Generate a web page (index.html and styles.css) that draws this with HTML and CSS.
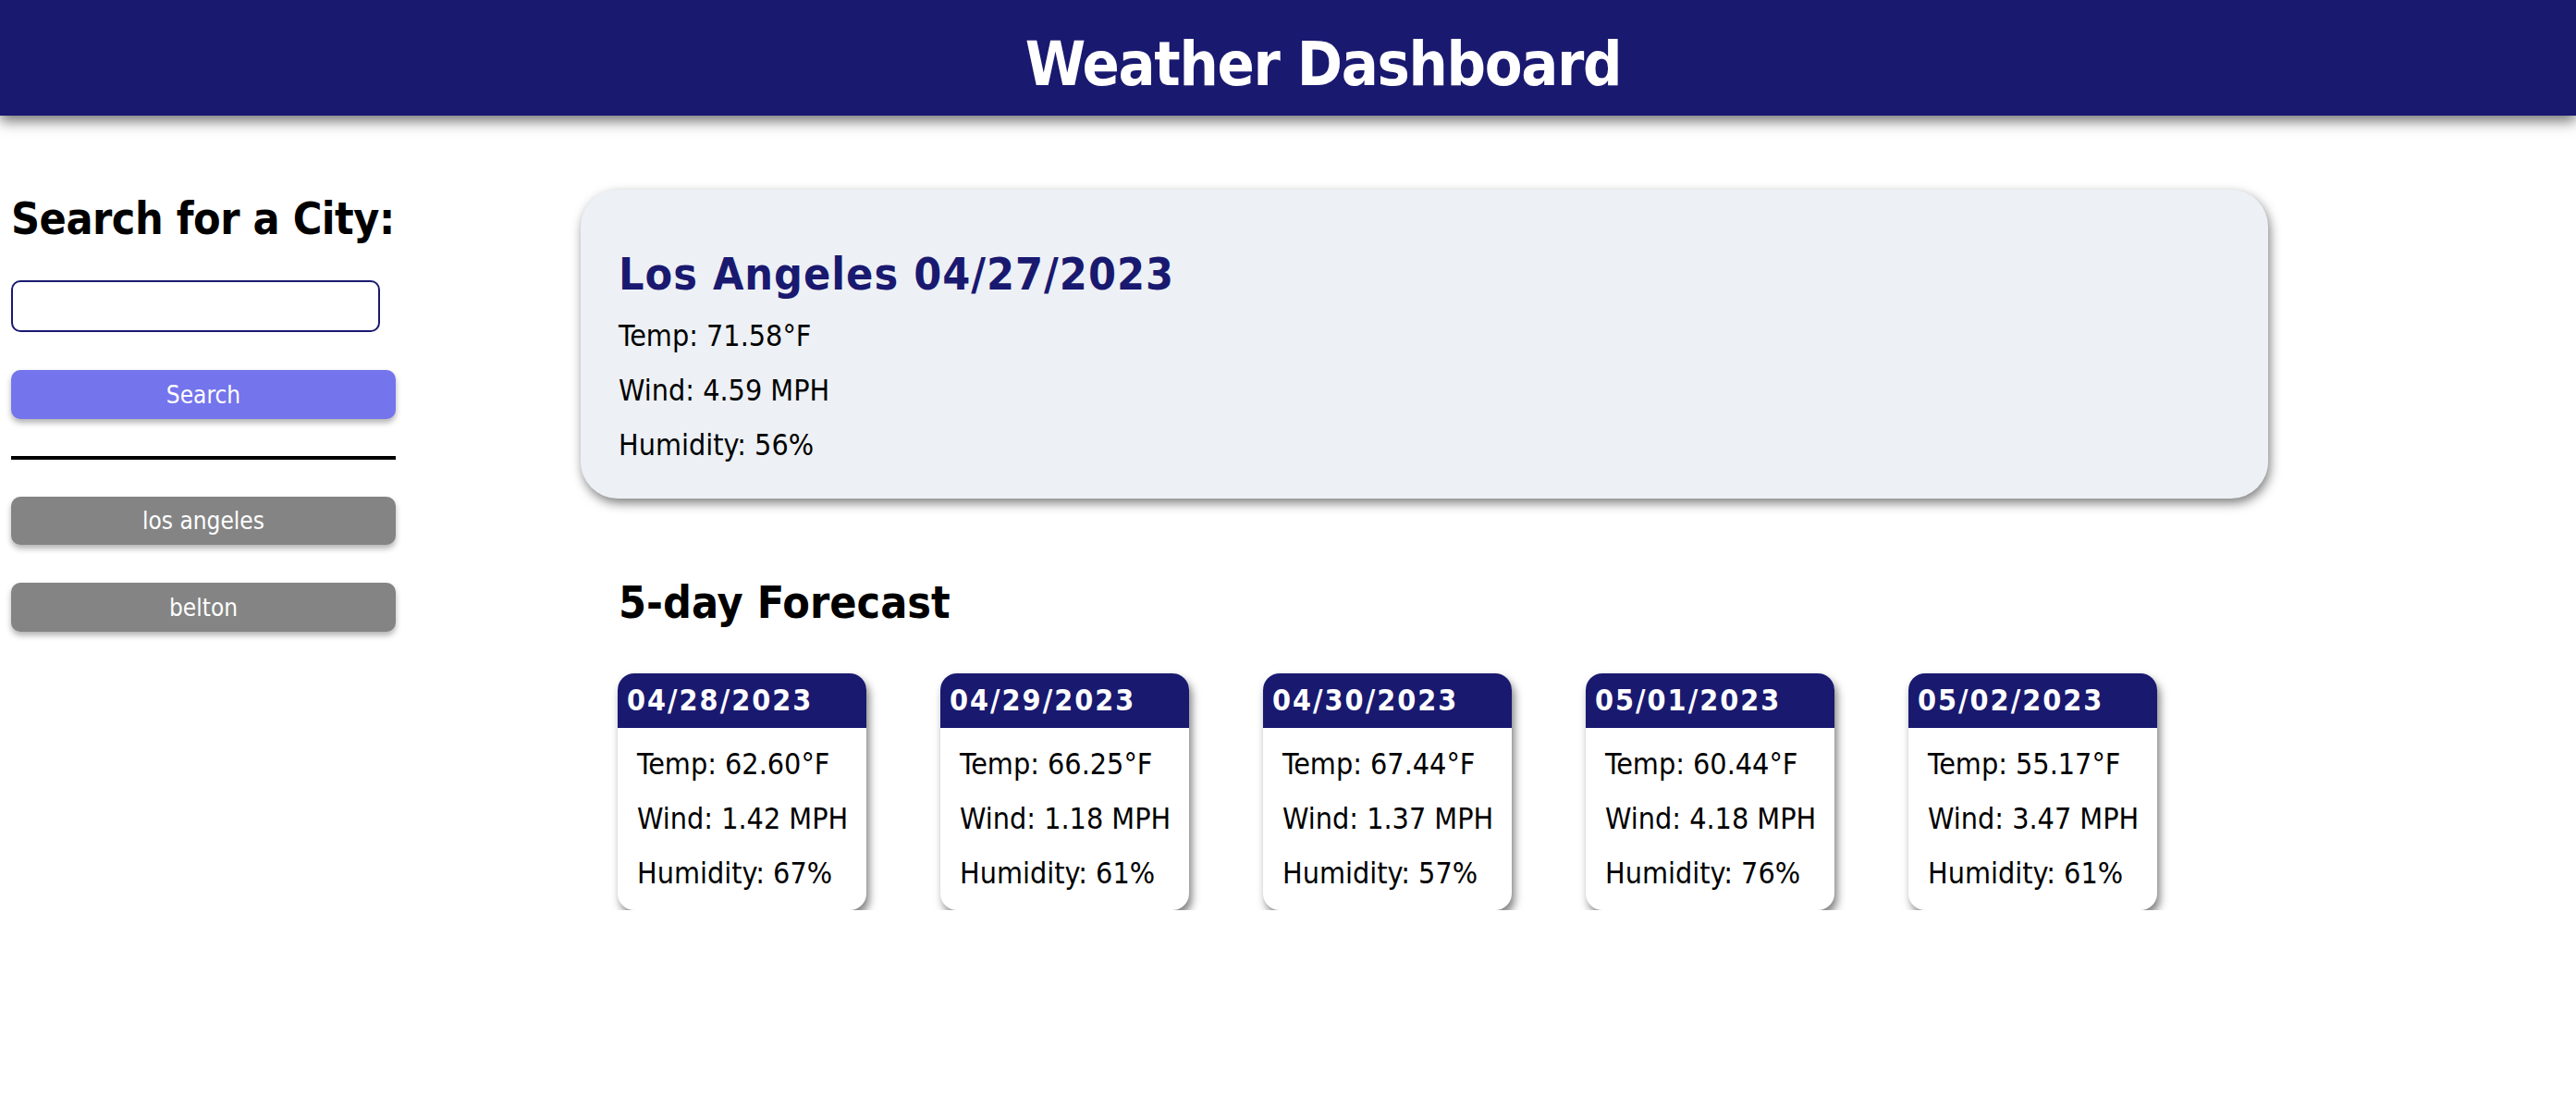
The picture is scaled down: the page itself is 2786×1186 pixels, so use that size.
FILE: index.html
```html
<!DOCTYPE html>
<html lang="en">
<head>
<meta charset="utf-8">
<title>Weather Dashboard</title>
<link rel="stylesheet" href="styles.css">
</head>
<body>
<header class="topbar">
  <h1 class="topbar-title">Weather Dashboard</h1>
</header>
<div class="layout">
  <aside class="sidebar">
    <h2 class="sidebar-title">Search for a City:</h2>
    <input class="city-input" type="text">
    <button class="btn btn-search">Search</button>
    <hr class="divider">
    <button class="btn btn-history btn-first">los angeles</button>
    <button class="btn btn-history">belton</button>
  </aside>
  <main class="main">
    <section class="current">
      <h2 class="current-title">Los Angeles 04/27/2023</h2>
      <p class="line">Temp: 71.58°F</p>
      <p class="line">Wind: 4.59 MPH</p>
      <p class="line">Humidity: 56%</p>
    </section>
    <h2 class="forecast-title">5-day Forecast</h2>
    <div class="forecast-row">
      <div class="day">
        <h4 class="day-date">04/28/2023</h4>
        <div class="day-body">
          <p class="line">Temp: 62.60°F</p>
          <p class="line">Wind: 1.42 MPH</p>
          <p class="line">Humidity: 67%</p>
        </div>
      </div>
      <div class="day">
        <h4 class="day-date">04/29/2023</h4>
        <div class="day-body">
          <p class="line">Temp: 66.25°F</p>
          <p class="line">Wind: 1.18 MPH</p>
          <p class="line">Humidity: 61%</p>
        </div>
      </div>
      <div class="day">
        <h4 class="day-date">04/30/2023</h4>
        <div class="day-body">
          <p class="line">Temp: 67.44°F</p>
          <p class="line">Wind: 1.37 MPH</p>
          <p class="line">Humidity: 57%</p>
        </div>
      </div>
      <div class="day">
        <h4 class="day-date">05/01/2023</h4>
        <div class="day-body">
          <p class="line">Temp: 60.44°F</p>
          <p class="line">Wind: 4.18 MPH</p>
          <p class="line">Humidity: 76%</p>
        </div>
      </div>
      <div class="day">
        <h4 class="day-date">05/02/2023</h4>
        <div class="day-body">
          <p class="line">Temp: 55.17°F</p>
          <p class="line">Wind: 3.47 MPH</p>
          <p class="line">Humidity: 61%</p>
        </div>
      </div>
    </div>
  </main>
</div>
</body>
</html>
```
FILE: styles.css
```css
* { box-sizing: border-box; }

html, body {
  margin: 0;
  padding: 0;
  background: #ffffff;
}

body {
  font-family: "DejaVu Sans Condensed", "DejaVu Sans", sans-serif;
  font-stretch: condensed;
  color: #000000;
}

.topbar {
  height: 125px;
  background: #191970;
  box-shadow: 0 6px 14px rgba(0, 0, 0, 0.55);
  padding-top: 15px;
  padding-left: 76px;
  position: relative;
  z-index: 1;
}

.topbar-title {
  margin: 0;
  text-align: center;
  color: #ffffff;
  font-size: 66px;
  font-weight: bold;
  line-height: 110px;
  letter-spacing: -1.3px;
}

.layout {
  display: flex;
  padding-top: 80px;
}

.sidebar {
  width: 428px;
  padding-left: 12px;
  display: flex;
  flex-direction: column;
  flex-shrink: 0;
}

.sidebar-title {
  margin: 3px 0 0 0;
  font-size: 48px;
  line-height: 56px;
  font-weight: bold;
  letter-spacing: -0.5px;
  white-space: nowrap;
}

.city-input {
  margin-top: 39px;
  width: 399px;
  height: 56px;
  border: 2px solid #191970;
  border-radius: 10px;
  background: #ffffff;
}

.btn {
  display: block;
  width: 416px;
  border: 0;
  border-radius: 10px;
  color: #ffffff;
  font-family: inherit;
  font-stretch: condensed;
  font-size: 26px;
  box-shadow: 0 4px 6px rgba(0, 0, 0, 0.3);
  padding: 0;
}

.btn-search {
  margin-top: 41px;
  height: 53px;
  background: #7474ec;
}

.divider {
  margin: 40px 0 0 0;
  width: 416px;
  height: 4px;
  border: 0;
  background: #000000;
}

.btn-history {
  margin-top: 41px;
  height: 53px;
  background: #848484;
}

.btn-first {
  margin-top: 40px;
  height: 52px;
}

.main {
  margin-left: 200px;
  width: 1825px;
  flex-shrink: 0;
}

.current {
  background: #edf0f5;
  border-radius: 40px;
  padding: 1px 41px 28px 41px;
  box-shadow: 2px 5px 12px rgba(0, 0, 0, 0.5);
}

.current-title {
  margin: 62px 0 10px 0;
  color: #191970;
  font-size: 48px;
  line-height: 56px;
  font-weight: bold;
  letter-spacing: 1px;
}

.line {
  margin: 0;
  font-size: 32px;
  line-height: 59px;
}

.forecast-title {
  margin: 84px 0 0 41px;
  font-size: 48px;
  line-height: 56px;
  font-weight: bold;
}

.forecast-row {
  display: flex;
  gap: 80px;
  margin: 49px 0 0 40px;
}

.day {
  width: 269px;
  border-radius: 18px;
  background: #ffffff;
  box-shadow: 3px 6px 10px rgba(0, 0, 0, 0.5);
  overflow: hidden;
}

.day-date {
  margin: 0;
  height: 59px;
  padding-left: 10px;
  background: #191970;
  color: #ffffff;
  font-size: 32px;
  line-height: 59px;
  font-weight: bold;
  letter-spacing: 2px;
}

.day-body {
  padding: 10px 0 10px 21px;
}
```
